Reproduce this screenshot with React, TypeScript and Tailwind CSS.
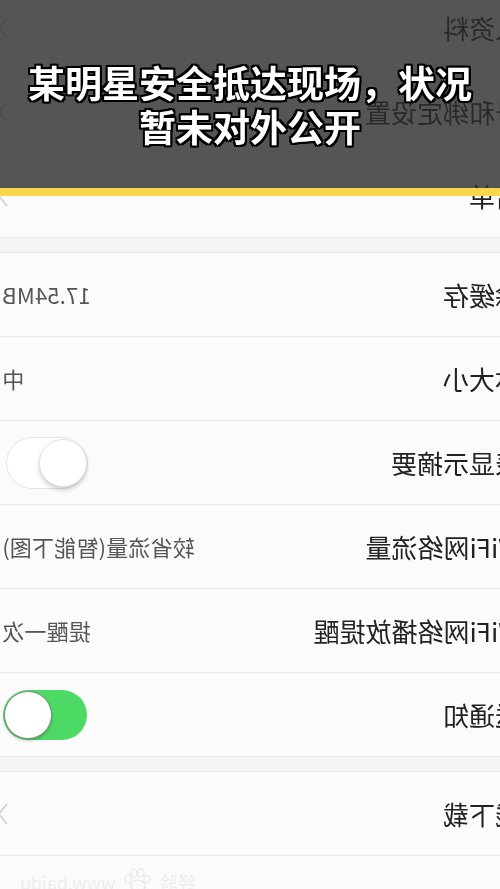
import type { ReactNode } from 'react'

type Row = {
  label: string
  value?: string
  chevron?: boolean
  toggle?: 'on' | 'off'
}

const topRows: Row[] = [
  { label: '个人资料', chevron: true },
  { label: '账号和绑定设置', chevron: true },
  { label: '黑名单', chevron: true },
]

const midRows: Row[] = [
  { label: '清除缓存', value: '17.54MB' },
  { label: '字体大小', value: '中' },
  { label: '列表显示摘要', toggle: 'off' },
  { label: '非WiFi网络流量', value: '较省流量(智能下图)' },
  { label: '非WiFi网络播放提醒', value: '提醒一次' },
  { label: '推送通知', toggle: 'on' },
]

const lastRows: Row[] = [{ label: '离线下载', chevron: true }]

function Chevron() {
  return (
    <svg width="10" height="22" viewBox="0 0 10 22" className="-mr-[4px]">
      <polyline points="1,1 9,11 1,21" fill="none" stroke="#cfcfcf" strokeWidth="1.6" />
    </svg>
  )
}

function Toggle({ on }: { on: boolean }) {
  if (on) {
    return (
      <div className="mr-[1px] flex h-[50px] w-[84px] items-center justify-end rounded-full bg-[#4cd964] p-[1px]">
        <div className="h-[48px] w-[48px] rounded-full border border-[#7d8f7d] bg-white shadow-[0_2px_3px_rgba(0,0,0,0.2)]" />
      </div>
    )
  }
  return (
    <div className="mr-[4px] flex h-[52px] w-[82px] items-center justify-start rounded-full border-[1.5px] border-[#e4e4e4] bg-white">
      <div className="h-[48px] w-[48px] rounded-full border border-[#e2e2e2] bg-white shadow-[0_3px_4px_rgba(0,0,0,0.18)]" />
    </div>
  )
}

function SettingRow({ row }: { row: Row }) {
  let right: ReactNode = null
  if (row.value) right = <span className="text-[22px] tracking-[0.2px] text-[#555]">{row.value}</span>
  if (row.chevron) right = <Chevron />
  if (row.toggle) right = <Toggle on={row.toggle === 'on'} />

  return (
    <div className="flex h-[84px] items-center justify-between border-b border-[#e7e7e7] bg-[#fbfbfb] pl-4 pr-[2px]">
      <span className="whitespace-nowrap text-[26px] text-[#222]">{row.label}</span>
      {right}
    </div>
  )
}

export default function App() {
  return (
    <div className="relative h-[889px] w-[500px] overflow-hidden bg-[#fbfbfb] font-['Noto_Sans_CJK_SC',sans-serif]">
      {/* the settings page, shown mirrored */}
      <div className="-scale-x-100">
        <div className="-mt-[14px] ml-[-63px] w-[563px]">
          {topRows.map((r) => (
            <SettingRow key={r.label} row={r} />
          ))}
          <div className="h-[15px] border-b border-[#e7e7e7] bg-[#f4f4f4]" />
          {midRows.map((r) => (
            <SettingRow key={r.label} row={r} />
          ))}
          <div className="h-[15px] border-b border-[#e7e7e7] bg-[#f4f4f4]" />
          {lastRows.map((r) => (
            <SettingRow key={r.label} row={r} />
          ))}
          <div className="flex h-[40px] items-end justify-end gap-2 pr-[20px] text-[18px] text-[#ededed]">
            <span>经验</span>
            <svg width="28" height="26" viewBox="0 0 28 26" className="mb-[2px]">
              <g fill="none" stroke="#e6e6e6" strokeWidth="1.2">
                <ellipse cx="14" cy="18" rx="7" ry="6" />
                <ellipse cx="5" cy="11" rx="3" ry="4" />
                <ellipse cx="11" cy="5" rx="3" ry="4" />
                <ellipse cx="18" cy="5" rx="3" ry="4" />
                <ellipse cx="24" cy="11" rx="3" ry="4" />
              </g>
            </svg>
            <span>www.baidu</span>
          </div>
        </div>
      </div>

      {/* headline banner over the page */}
      <div className="absolute left-0 top-0 flex h-[188px] w-full flex-col items-center justify-center bg-[rgba(44,44,44,0.8)] pt-[20px]">
        <p className="text-center text-[37px] font-bold leading-[44px] text-white [text-shadow:2px_0_0_#000,-2px_0_0_#000,0_2px_0_#000,0_-2px_0_#000,2px_2px_0_#000,-2px_-2px_0_#000,2px_-2px_0_#000,-2px_2px_0_#000]">
          某明星安全抵达现场，状况
          <br />
          暂未对外公开
        </p>
      </div>
      <div className="absolute left-0 top-[188px] h-[8px] w-full bg-[#fdd54c]" />
    </div>
  )
}
